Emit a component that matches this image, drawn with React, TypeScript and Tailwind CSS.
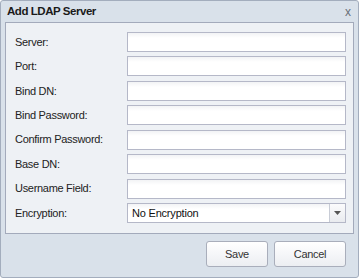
import React from "react";

const font = { fontFamily: '"Liberation Sans", Arial, sans-serif' };

function Field({ label }: { label: string }) {
  return (
    <div className="flex items-center h-[20px]">
      <div className="w-[112px] text-[11px] text-[#222] tracking-[-0.3px]">{label}</div>
      <div className="w-[219px] h-[20px] border border-[#b5b8c8] bg-[linear-gradient(#f2f3f5,#ffffff_5px)]" />
    </div>
  );
}

export default function App() {
  const labels = [
    "Server:",
    "Port:",
    "Bind DN:",
    "Bind Password:",
    "Confirm Password:",
    "Base DN:",
    "Username Field:",
  ];
  return (
    <div style={font} className="w-[359px] h-[278px] flex flex-col border border-[#a3adbd] rounded-[3px] bg-[#d9e1ea]">
      <div className="h-[21px] flex items-center justify-between pl-[6px] pr-[7px]">
        <span className="text-[11.5px] font-bold text-[#1a1a1a] tracking-[-0.45px]">Add LDAP Server</span>
        <span className="text-[12px] text-[#6a6f78] leading-none">x</span>
      </div>
      <div className="mx-[4px] h-[212px] border border-[#a3aabb] bg-[#eef1f5] pt-[9px] pl-[9px] flex flex-col gap-[4.43px]">
        {labels.map((l) => (
          <Field key={l} label={l} />
        ))}
        <div className="flex items-center h-[20px]">
          <div className="w-[112px] text-[11px] text-[#222] tracking-[-0.3px]">Encryption:</div>
          <div className="w-[219px] h-[20px] border border-[#b5b8c8] bg-white flex">
            <div className="flex-1 flex items-center pl-[4px] text-[11px] text-[#111] tracking-[-0.2px] bg-[linear-gradient(#f2f3f5,#ffffff_5px)]">
              No Encryption
            </div>
            <div className="w-[16px] border-l border-[#c8ccd6] bg-[linear-gradient(#fbfbfc,#e9ebef)] flex items-center justify-center">
              <svg width="7" height="4" viewBox="0 0 7 4">
                <path d="M0 0H7L3.5 4Z" fill="#555" />
              </svg>
            </div>
          </div>
        </div>
      </div>
      <div className="flex justify-end gap-[6px] pt-[7px] pr-[12px]">
        <button className="w-[62px] h-[26px] rounded-[3px] border border-[#a9aebb] bg-[linear-gradient(#ffffff,#eceef2)] text-[11px] text-[#333] tracking-[-0.3px]">
          Save
        </button>
        <button className="w-[72px] h-[26px] rounded-[3px] border border-[#a9aebb] bg-[linear-gradient(#ffffff,#eceef2)] text-[11px] text-[#333] tracking-[-0.3px]">
          Cancel
        </button>
      </div>
    </div>
  );
}
